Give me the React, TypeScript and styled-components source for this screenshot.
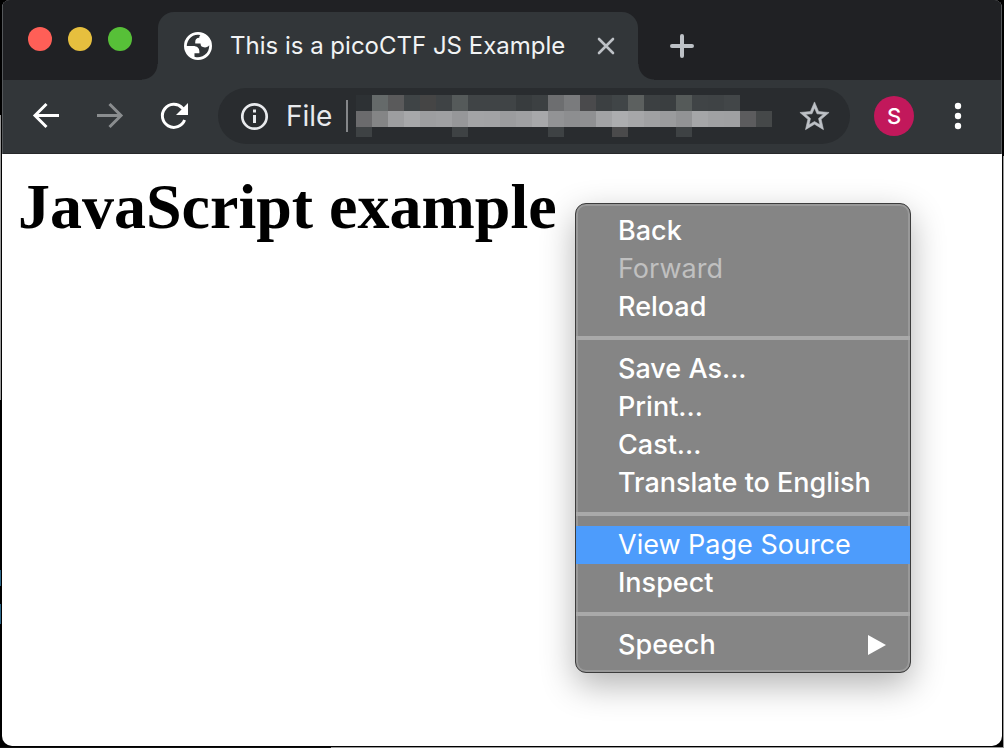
import React from "react";
import styled, { createGlobalStyle } from "styled-components";
import { MdStarOutline } from "react-icons/md";

const sans = `Inter, Roboto, "Liberation Sans", sans-serif`;

const GlobalStyle = createGlobalStyle`
  * { box-sizing: border-box; }
  body { margin: 0; background: #000; }
  button { font: inherit; color: inherit; background: none; border: 0; padding: 0; }
`;

const Desktop = styled.div`
  display: flex;
  min-height: 100vh;
  padding: 0 2px 2px;
  background:
    linear-gradient(#2b6688, #2b6688) 0 570px / 1px 16px no-repeat,
    linear-gradient(#2b6688, #2b6688) 0 604px / 1px 20px no-repeat,
    linear-gradient(#9a9a9a, #9a9a9a) 0 115px / 1px 285px no-repeat,
    linear-gradient(#9a9a9a, #9a9a9a) 100% 156px / 1px 100% no-repeat,
    linear-gradient(90deg, #111 33%, #9a9a9a 33%) 0 100% / 100% 1px no-repeat,
    #000;
`;

const BrowserWindow = styled.div`
  flex: 1;
  display: flex;
  flex-direction: column;
  min-width: 0;
  overflow: hidden;
  border-radius: 8px 8px 10px 10px;
  background: #fff;
`;

const Chrome = styled.header`
  border: solid #55585b;
  border-width: 0 1px;
  background: #323639;
  font-family: ${sans};
`;

const TabStrip = styled.div`
  display: flex;
  height: 80px;
  padding: 12px 0 0 25px;
  background: #202124;
`;

const TrafficLights = styled.div`
  display: flex;
  gap: 16px;
  padding-top: 15px;
  margin-right: 26px;
`;

const Light = styled.button<{ $color: string }>`
  width: 24px;
  height: 24px;
  border-radius: 50%;
  background: ${(p) => p.$color};
`;

const Tab = styled.div`
  position: relative;
  display: flex;
  align-items: center;
  width: 480px;
  padding: 0 22px 0 26px;
  border-radius: 16px 16px 0 0;
  background: #323639;
  color: #f1f3f4;

  &::before,
  &::after {
    content: "";
    position: absolute;
    bottom: 0;
    width: 16px;
    height: 16px;
  }
  &::before {
    right: 100%;
    background: radial-gradient(circle at 0 0, #202124 15px, #323639 16px);
  }
  &::after {
    left: 100%;
    background: radial-gradient(circle at 100% 0, #202124 15px, #323639 16px);
  }
`;

const TabTitle = styled.span`
  flex: 1;
  margin-left: 18px;
  font-size: 24px;
  line-height: 32px;
  white-space: nowrap;
`;

const IconButton = styled.button<{ $size: number }>`
  display: grid;
  place-items: center;
  flex: none;
  width: ${(p) => p.$size}px;
  height: ${(p) => p.$size}px;

  svg { display: block; }
`;

const NewTab = styled(IconButton)`
  align-self: center;
  margin-left: 30px;
  color: #bdc1c6;
`;

const Toolbar = styled.div`
  display: flex;
  align-items: center;
  height: 74px;
  padding: 0 23px 1px;
  border-bottom: 1px solid #27292b;
  color: #fff;
`;

const NavButtons = styled.div`
  display: flex;
  gap: 24px;
  margin-right: 24px;
`;

const AddressBar = styled.div`
  flex: 1;
  display: flex;
  align-items: center;
  min-width: 0;
  height: 56px;
  padding: 0 16px 0 20px;
  border-radius: 28px;
  background: #292c2f;
  color: #e8eaed;
`;

const Scheme = styled.span`
  margin-left: 16px;
  padding-right: 14px;
  border-right: 2px solid #85878a;
  font-size: 28px;
  line-height: 32px;
`;

const HiddenUrl = styled.svg`
  flex: none;
  margin-left: 8px;
`;

const Star = styled(IconButton)`
  margin-left: auto;
  color: #bdc1c6;
`;

const Avatar = styled.button`
  width: 40px;
  height: 40px;
  margin: 0 24px;
  border-radius: 50%;
  background: #c2185b;
  color: #fff;
  font-size: 22px;
  font-weight: 500;
  line-height: 40px;
`;

const Page = styled.main`
  position: relative;
  flex: 1;
  padding: 16px;
`;

const Heading = styled.h1`
  margin: 0;
  font: bold 64px/74px "Liberation Serif", "Times New Roman", serif;
  color: #000;
`;

const ContextMenu = styled.div`
  position: absolute;
  top: 49px;
  left: 573px;
  width: 336px;
  padding: 8px 0;
  border: 1px solid #3c3c3c;
  border-radius: 11px;
  background: #858585;
  box-shadow: inset 0 0 0 2px #999, 0 12px 34px rgba(0, 0, 0, 0.3);
  font-family: ${sans};
`;

const MenuItem = styled.button<{ $active?: boolean }>`
  display: flex;
  align-items: center;
  justify-content: space-between;
  width: 100%;
  height: 38px;
  padding: 0 24px 0 42px;
  background: ${(p) => (p.$active ? "#4d9cfc" : "transparent")};
  color: #fff;
  font-size: 27px;
  font-weight: ${(p) => (p.$active ? 400 : 500)};
  line-height: 38px;
  text-align: left;
  white-space: nowrap;

  &:disabled {
    color: #c0c0c0;
    font-weight: 400;
  }
`;

const Separator = styled.hr`
  height: 4px;
  margin: 10px 0;
  border: 0;
  background: #a9a9a9;
`;

const topCells = "2d3134 656a6a 5a5a5b 3f4446 454545 3f4345 555a5a 404446 404446 404446 383c3e 3c4042 6d6e70 7a7b7d 4a4a4c 3c4042 404547 5c605f 3c4042 3a3e40 555a59 404446 3f4345 424648".split(" ");
const middleCells = "6b6b6d 848586 9d9ea0 a7a8aa 9d9ea0 9fa0a2 969799 a3a4a6 a2a3a5 9b9c9e 9fa0a2 a7a8aa 929395 8d8e90 8f9092 a2a3a5 acadaf a6a7a9 a0a1a3 9a9b9d 929395 a5a6a8 a0a1a3 9fa0a2 5c5c5e 454849".split(" ");
const bottomCells: [number, string][] = [[0, "3e4244"], [6, "3e4244"], [12, "3e4244"], [16, "4a4a4b"], [20, "3e4244"]];

function PixelatedUrl() {
  return (
    <HiddenUrl width="416" height="42" shapeRendering="crispEdges" role="img" aria-label="Hidden address">
      {topCells.map((c, i) => <rect key={i} x={i * 16} y="0" width="16" height="16" fill={`#${c}`} />)}
      {middleCells.map((c, i) => <rect key={i} x={i * 16} y="16" width="16" height="16" fill={`#${c}`} />)}
      {bottomCells.map(([i, c]) => <rect key={i} x={i * 16} y="32" width="16" height="10" fill={`#${c}`} />)}
    </HiddenUrl>
  );
}

function Globe() {
  return (
    <svg width="28" height="28" viewBox="2 2 20 20" fill="#fff" fillRule="evenodd">
      <path d="M12 2a10 10 0 1 1 0 20 10 10 0 0 1 0-20zM4 12h4.4c3.407.022 4.922 1.73 4.543 5.127H9.488v2.47a8.004 8.004 0 0 0 10.498-8.08C19.327 12.506 18.332 13 17 13c-2.137 0-3.206-.916-3.206-2.75h-3.748c-.274-2.728.683-4.092 2.87-4.092 0-.975.327-1.597.811-1.97A8.004 8.004 0 0 0 4 12z" />
    </svg>
  );
}

function Arrow({ forward }: { forward?: boolean }) {
  return (
    <svg width="28" height="28" viewBox="0 0 28 28" fill="none" stroke={forward ? "#8a8d8f" : "#fff"} strokeWidth="3">
      {forward ? (
        <path d="M1 13.5H25M13.5 2L25 13.5L13.5 25" />
      ) : (
        <path d="M27 13.5H3M14.5 2L3 13.5L14.5 25" />
      )}
    </svg>
  );
}

function Reload() {
  return (
    <svg width="40" height="40" fill="none" stroke="#fff" strokeWidth="3">
      <path d="M30.6 24A11.5 11.5 0 1 1 28.2 11.9L30 13.7" />
      <path d="M34 7V19H22Z" fill="#fff" stroke="none" />
    </svg>
  );
}

export default function App() {
  return (
    <>
      <GlobalStyle />
      <Desktop>
        <BrowserWindow>
          <Chrome>
            <TabStrip>
              <TrafficLights>
                <Light $color="#ff5f57" aria-label="Close window" />
                <Light $color="#e6bf3e" aria-label="Minimize window" />
                <Light $color="#57c038" aria-label="Zoom window" />
              </TrafficLights>
              <Tab>
                <Globe />
                <TabTitle>This is a picoCTF JS Example</TabTitle>
                <IconButton $size={20} aria-label="Close tab">
                  <svg width="20" height="20" fill="none" stroke="#bdc1c6" strokeWidth="2.6" strokeLinecap="round">
                    <path d="M3 3L17 17M17 3L3 17" />
                  </svg>
                </IconButton>
              </Tab>
              <NewTab $size={28} aria-label="New tab">
                <svg width="28" height="28" fill="none" stroke="currentColor" strokeWidth="4" strokeLinecap="round">
                  <path d="M14 4V24M4 14H24" />
                </svg>
              </NewTab>
            </TabStrip>
            <Toolbar>
              <NavButtons>
                <IconButton $size={40} aria-label="Back"><Arrow /></IconButton>
                <IconButton $size={40} aria-label="Forward"><Arrow forward /></IconButton>
                <IconButton $size={40} aria-label="Reload"><Reload /></IconButton>
              </NavButtons>
              <AddressBar>
                <IconButton $size={32} aria-label="View site information">
                  <svg width="32" height="32" fill="none" stroke="currentColor" strokeWidth="2.7">
                    <circle cx="16.5" cy="16.5" r="12.2" />
                    <path d="M16.5 9.5V12.5M16.5 15V23" strokeWidth="3" />
                  </svg>
                </IconButton>
                <Scheme>File</Scheme>
                <PixelatedUrl />
                <Star $size={40} aria-label="Bookmark this tab">
                  <MdStarOutline size={35} strokeWidth="0.4" />
                </Star>
              </AddressBar>
              <Avatar aria-label="Profile S">S</Avatar>
              <IconButton $size={40} aria-label="Customize and control">
                <svg width="40" height="40" fill="currentColor">
                  <circle cx="20" cy="10" r="3.2" />
                  <circle cx="20" cy="20" r="3.2" />
                  <circle cx="20" cy="30" r="3.2" />
                </svg>
              </IconButton>
            </Toolbar>
          </Chrome>
          <Page>
            <Heading>JavaScript example</Heading>
            <ContextMenu>
              <MenuItem>Back</MenuItem>
              <MenuItem disabled>Forward</MenuItem>
              <MenuItem>Reload</MenuItem>
              <Separator />
              <MenuItem>Save As...</MenuItem>
              <MenuItem>Print...</MenuItem>
              <MenuItem>Cast...</MenuItem>
              <MenuItem>Translate to English</MenuItem>
              <Separator />
              <MenuItem $active>View Page Source</MenuItem>
              <MenuItem>Inspect</MenuItem>
              <Separator />
              <MenuItem>
                Speech
                <svg width="18" height="20" fill="#fff"><path d="M0 0L18 10L0 20Z" /></svg>
              </MenuItem>
            </ContextMenu>
          </Page>
        </BrowserWindow>
      </Desktop>
    </>
  );
}
